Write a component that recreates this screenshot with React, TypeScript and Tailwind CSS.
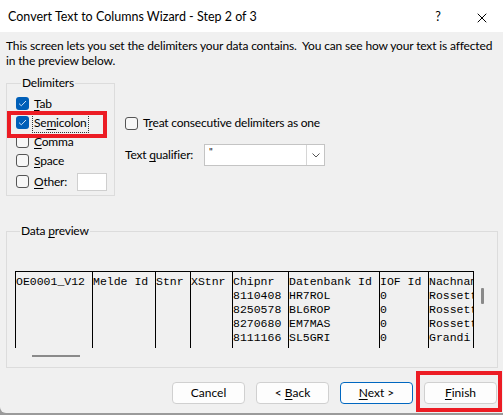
import React from "react";
import { X } from "lucide-react";

const ui = { fontFamily: 'Lato, "Noto Sans", sans-serif' };
const mono = { fontFamily: '"Liberation Mono", "Courier New", monospace' };

function Box({ checked }: { checked?: boolean }) {
    if (checked) {
        return (
            <span className="w-[13px] h-[13px] rounded-[3px] bg-[#005fb8] flex items-center justify-center shrink-0">
                <svg width="9" height="7" viewBox="0 0 9 7">
                    <path d="M1 3.6 L3.3 5.8 L8 1" stroke="#cfe2f7" strokeWidth="1" fill="none" />
                </svg>
            </span>
        );
    }
    return <span className="w-[13px] h-[13px] rounded-[3px] border border-[#555] bg-[#f7f7f7] shrink-0" />;
}

function Key({ children }: { children: React.ReactNode }) {
    return <span className="underline underline-offset-[2px]">{children}</span>;
}

const columns = [
    { w: 77, head: "OE0001_V12", rows: [] as string[] },
    { w: 63, head: "Melde Id", rows: [] },
    { w: 35, head: "Stnr", rows: [] },
    { w: 42, head: "XStnr", rows: [] },
    { w: 56, head: "Chipnr", rows: ["8110408", "8250578", "8270680", "8111166"] },
    { w: 91, head: "Datenbank Id", rows: ["HR7ROL", "BL6ROP", "EM7MAS", "SL5GRI"] },
    { w: 49, head: "IOF Id", rows: ["0", "0", "0", "0"] },
    { w: 45, head: "Nachname", rows: ["Rossetti", "Rossetti", "Rossetti", "Grandi"] },
];

function Btn({ children, primary }: { children: React.ReactNode; primary?: boolean }) {
    return (
        <button
            className={`w-[73px] h-[22px] rounded-[4px] bg-[#fdfdfd] text-[12px] text-black flex items-center justify-center border ${primary ? "border-[#0067c0]" : "border-[#d0d0d0]"}`}
        >
            <span>{children}</span>
        </button>
    );
}

export default function App() {
    return (
        <div className="w-[503px] h-[415px] overflow-hidden bg-[#9a9a9a]" style={ui}>
            <div className="h-[3px] bg-white" />
            <div className="w-[503px] h-[410px] bg-[#f0f0f0] rounded-bl-[6px] flex flex-col text-black">
                {/* title bar */}
                <div className="h-[29px] bg-white flex items-center justify-between pl-[8px] pr-[13px] text-[12.5px]">
                    <span>Convert Text to Columns Wizard - Step 2 of 3</span>
                    <div className="flex items-center gap-[31px]">
                        <span className="w-[10px] text-center">?</span>
                        <span className="w-[16px] h-[16px] flex items-center justify-center text-black">
                            <X size={16} strokeWidth={1.5} color="#000000" />
                        </span>
                    </div>
                </div>

                <div className="pl-[6px] pr-[5px]">
                    <p className="text-[12px] leading-[15px] mt-[6px] tracking-[-0.15px]">
                        <span className="whitespace-nowrap">This screen lets you set the delimiters your data contains.&nbsp; You can see how your text is affected</span>
                        <br />
                        in the preview below.
                    </p>

                    <div className="flex mt-[7px] text-[12px] tracking-[-0.2px]">
                        <fieldset className="w-[109px] min-w-0 shrink-0 border border-[#dcdcdc] px-[9px] pt-[3px] pb-[4px]">
                            <legend className="ml-[5px] px-[1px] leading-[16px]">Delimiters</legend>
                            <div className="flex flex-col">
                                <label className="h-[19px] flex items-center gap-[5px]">
                                    <Box checked /> <span><Key>T</Key>ab</span>
                                </label>
                                <label className="h-[19px] flex items-center gap-[5px] relative">
                                    <Box checked />
                                    <span className="outline outline-1 outline-dotted outline-[#333] px-[1px] -ml-[1px]">Se<Key>m</Key>icolon</span>
                                    <span className="absolute -left-[9px] -top-[2px] w-[100px] h-[27px] border-[4px] border-[#ec1c24]" />
                                </label>
                                <label className="h-[19px] flex items-center gap-[5px]">
                                    <Box /> <span><Key>C</Key>omma</span>
                                </label>
                                <label className="h-[19px] flex items-center gap-[5px]">
                                    <Box /> <span><Key>S</Key>pace</span>
                                </label>
                                <label className="h-[19px] mt-[2px] flex items-center gap-[5px]">
                                    <Box /> <span><Key>O</Key>ther:</span>
                                    <span className="w-[30px] h-[18px] bg-white border border-[#cfcfcf] ml-[5px] shrink-0" />
                                </label>
                            </div>
                        </fieldset>

                        <div className="ml-[10px] pt-[39px]">
                            <label className="flex items-center gap-[5px]">
                                <Box /> <span>T<Key>r</Key>eat consecutive delimiters as one</span>
                            </label>
                            <div className="flex items-center mt-[12px]">
                                <span className="w-[79px]">Text <Key>q</Key>ualifier:</span>
                                <div className="w-[121px] h-[22px] bg-white border border-[#c4c4c4] flex">
                                    <span className="flex-1 pl-[4px] text-[10px] leading-[12px]">"</span>
                                    <span className="w-[18px] border-l border-[#d6d6d6] flex items-center justify-center">
                                        <svg width="8" height="5" viewBox="0 0 8 5">
                                            <path d="M0.5 0.5 L4 4 L7.5 0.5" stroke="#555" fill="none" />
                                        </svg>
                                    </span>
                                </div>
                            </div>
                        </div>
                    </div>

                    <fieldset className="mt-[27px] border border-[#dcdcdc] pl-[8px] pt-[32px] pb-[10px] text-[12px] tracking-[-0.2px]">
                        <legend className="ml-[5px] px-[1px] leading-[16px]">Data <Key>p</Key>review</legend>
                        <div className="flex tracking-normal">
                            <div className="w-[459px] h-[77px] overflow-hidden border-t border-r border-black flex text-[11.5px] leading-[14px] text-black" style={mono}>
                                {columns.map((c) => (
                                    <div key={c.head} className="border-l border-black pt-[3px] whitespace-pre overflow-hidden shrink-0" style={{ width: c.w }}>
                                        <div>{c.head}</div>
                                        {c.rows.map((r, i) => (
                                            <div key={i}>{r}</div>
                                        ))}
                                    </div>
                                ))}
                            </div>
                            <div className="ml-[7px] mt-[17px] w-[3px] h-[16px] bg-[#8a8a8a] rounded-[1px]" />
                        </div>
                        <div className="ml-[17px] mt-[7px] w-[48px] h-[2px] bg-[#8a8a8a]" />
                    </fieldset>

                    <div className="flex justify-end gap-[11px] mt-[14px] pr-[1px]">
                        <Btn>Cancel</Btn>
                        <Btn>&lt;&nbsp;<Key>B</Key>ack</Btn>
                        <Btn primary><Key>N</Key>ext &gt;</Btn>
                        <div className="relative">
                            <Btn><Key>F</Key>inish</Btn>
                            <div className="absolute -left-[8px] -top-[11px] w-[86px] h-[41px] border-[4px] border-[#ec1c24]" />
                        </div>
                    </div>
                </div>
            </div>
        </div>
    );
}
